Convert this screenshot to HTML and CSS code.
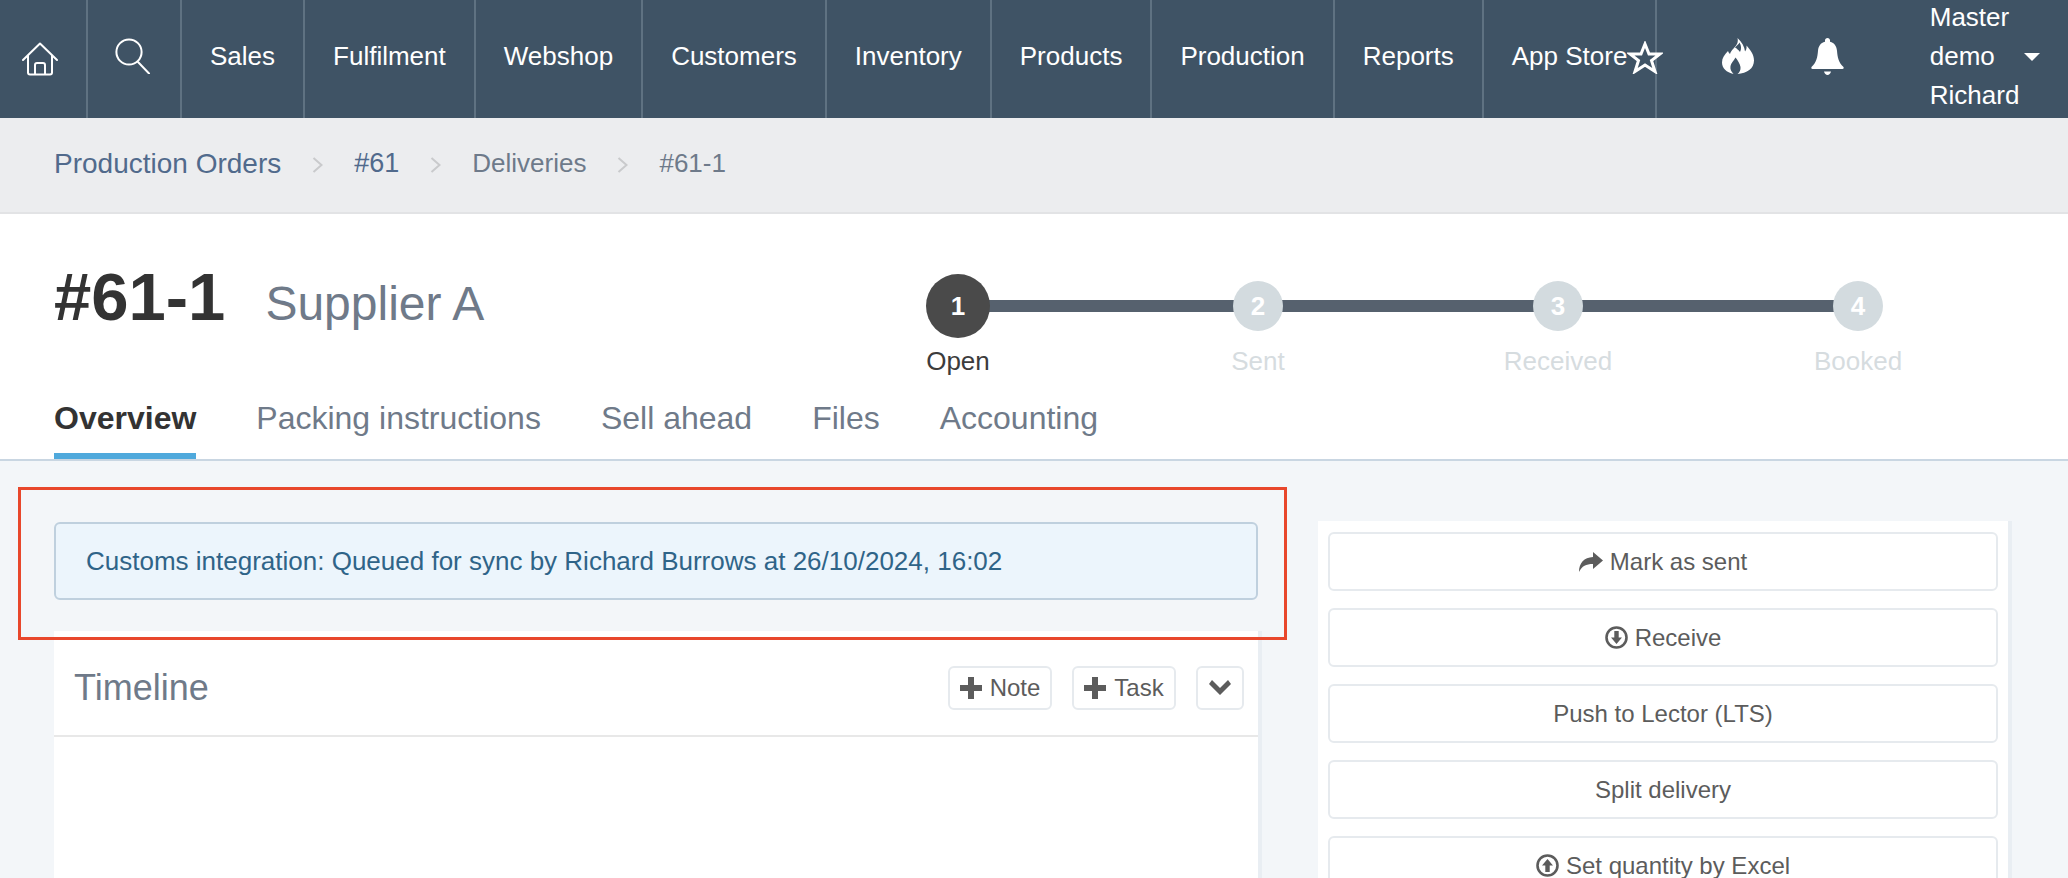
FILE: index.html
```html
<!DOCTYPE html>
<html lang="en">
<head>
<meta charset="utf-8">
<title>#61-1 Supplier A</title>
<link rel="stylesheet" href="styles.css">
</head>
<body>
<nav class="nav">
  <a class="nav-item nav-home"><svg class="icon" width="36" height="34" viewBox="0 0 36 34"><path class="line" d="M1 18 18 1.500 35 18M6 14v16.500a2 2 0 0 0 2 2h20a2 2 0 0 0 2-2V14M13 32V23a2 2 0 0 1 2-2h6a2 2 0 0 1 2 2v9"/></svg></a>
  <a class="nav-item nav-search"><svg class="icon" width="36" height="36" viewBox="0 0 36 36"><circle class="line" cx="14" cy="14" r="12.600"/><path class="line" d="M23 24 34 35.500"/></svg></a>
  <a class="nav-item">Sales</a>
  <a class="nav-item">Fulfilment</a>
  <a class="nav-item">Webshop</a>
  <a class="nav-item">Customers</a>
  <a class="nav-item">Inventory</a>
  <a class="nav-item">Products</a>
  <a class="nav-item">Production</a>
  <a class="nav-item">Reports</a>
  <a class="nav-item nav-store">App Store<svg class="star" width="36" height="33" viewBox="0 0 36 33"><path class="line-thick" d="M18 3 22 13H33L24.500 19.500 28 30.500 18 24 8 30.500 11.500 19.500 3 13H14Z"/></svg></a>
  <div class="nav-icons">
    <svg class="flame" width="32" height="36" viewBox="0 0 32 36"><path class="fill" fill-rule="evenodd" d="M15.500 0C16.500 4 15 7 12 10 10 12 8.500 14 8 16 7 15.200 6.500 14.200 6 13 2.500 16.500 0 20 0 24.500 0 30 4.500 34.500 11.500 36 9 33.500 8 31 8.500 28 9 25 11.500 23 13.500 19.500 15.500 22 18 25.500 18.500 29 18.800 32 17.500 34.500 15.500 36 25 35.500 32 30.500 32 22.500 32 16.500 28.500 12 24.500 7.500 24.800 10 24.300 12 23 13.500 22.500 9 20 4 15.500 0ZM13 9.500C15 7.500 16.800 6 17.500 4.500 19.500 8 19.500 11 18 14 16.500 12 14.800 10.500 13 9.500Z"/></svg>
    <svg class="bell" width="33" height="37" viewBox="0 0 33 37"><path class="fill" d="M16.500 0c1.500 0 2.500 1 2.500 2.500v1.200c4.500 1 6.500 4.500 7 9 .5 6 1.500 12 6.500 16.300.5 1 0 2-1 2H1.500c-1 0-1.500-1-1-2C5.500 24.700 6.500 18.700 7 12.700c.5-4.500 2.500-8 7-9V2.500C14 1 15 0 16.500 0ZM13 33.500h7c-.5 2-2 3.500-3.500 3.500S13.500 35.500 13 33.500Z"/></svg>
  </div>
  <div class="nav-user">
    <div class="nav-user-name">Master<br>demo<br>Richard</div>
    <span class="caret"></span>
  </div>
</nav>

<div class="crumbs">
  <a class="crumb crumb-link">Production Orders</a>
  <svg class="chev" width="11" height="16" viewBox="0 0 11 16"><path d="M1.500 1 9.500 8 1.500 15"/></svg>
  <a class="crumb crumb-link crumb-id">#61</a>
  <svg class="chev" width="11" height="16" viewBox="0 0 11 16"><path d="M1.500 1 9.500 8 1.500 15"/></svg>
  <a class="crumb">Deliveries</a>
  <svg class="chev" width="11" height="16" viewBox="0 0 11 16"><path d="M1.500 1 9.500 8 1.500 15"/></svg>
  <span class="crumb">#61-1</span>
</div>

<header class="head">
  <div class="head-top">
    <div class="title">
      <h1>#61-1</h1>
      <span class="supplier">Supplier A</span>
    </div>
    <ol class="steps">
      <li class="step step-active"><span class="dot">1</span><span class="step-label">Open</span></li>
      <li class="step"><span class="dot">2</span><span class="step-label">Sent</span></li>
      <li class="step"><span class="dot">3</span><span class="step-label">Received</span></li>
      <li class="step step-last"><span class="dot">4</span><span class="step-label">Booked</span></li>
    </ol>
  </div>
  <div class="tabs">
    <a class="tab tab-active">Overview</a>
    <a class="tab">Packing instructions</a>
    <a class="tab">Sell ahead</a>
    <a class="tab">Files</a>
    <a class="tab">Accounting</a>
  </div>
</header>

<main class="main">
  <section class="left">
    <div class="alert">Customs integration: Queued for sync by Richard Burrows at 26/10/2024, 16:02</div>
    <div class="card">
      <div class="card-head">
        <h2>Timeline</h2>
        <div class="card-actions">
          <button class="btn"><svg class="glyph" width="22" height="22" viewBox="0 0 22 22"><path d="M8 0h6v8h8v6h-8v8H8v-8H0V8h8Z"/></svg>Note</button>
          <button class="btn"><svg class="glyph" width="22" height="22" viewBox="0 0 22 22"><path d="M8 0h6v8h8v6h-8v8H8v-8H0V8h8Z"/></svg>Task</button>
          <button class="btn btn-icon"><svg class="glyph-chev" width="22" height="16" viewBox="0 0 22 16"><path d="M3 0 11 8 19 0 22 4 11 15 0 4Z"/></svg></button>
        </div>
      </div>
    </div>
  </section>
  <aside class="panel">
    <button class="action"><svg class="glyph" width="24" height="20" viewBox="0 0 24 20"><path d="M14 0 24 8.500 14 17V12C7 12 3 14 0 20 0 11 5 5.500 14 5Z"/></svg>Mark as sent</button>
    <button class="action"><svg class="glyph" width="23" height="23" viewBox="0 0 23 23"><circle cx="11.500" cy="11.500" r="10" fill="none" stroke="#5c5c5c" stroke-width="2.600"/><path d="M9.300 5h4.400v6.500h3.300l-5.500 6.500-5.500-6.500h3.300Z"/></svg>Receive</button>
    <button class="action">Push to Lector (LTS)</button>
    <button class="action">Split delivery</button>
    <button class="action"><svg class="glyph" width="23" height="23" viewBox="0 0 23 23"><circle cx="11.500" cy="11.500" r="10" fill="none" stroke="#5c5c5c" stroke-width="2.600"/><path d="M9.300 18h4.400v-6.500h3.300L11.500 5 6 11.500h3.300Z"/></svg>Set quantity by Excel</button>
  </aside>
  <div class="highlight"></div>
</main>
</body>
</html>
```
FILE: styles.css
```css
* { box-sizing: border-box; }
html, body { margin: 0; height: 100%; overflow: hidden; }
body { font-family: "Liberation Sans", Arial, sans-serif; font-size: 26px; background: #f3f6f9; color: #333; }
h1, h2, ol { margin: 0; padding: 0; }

.nav { display: flex; height: 118px; background: #3f5365; color: #fff; font-size: 26px; }
.nav-item { display: flex; align-items: center; padding: 0 28px 6px; border-right: 2px solid #5f7282; white-space: nowrap; }
.nav-home { width: 88px; padding: 0 0 0 22px; }
.nav-search { width: 94px; padding: 0 0 6px 27px; }
.nav-store { padding-right: 0; width: 173px; }
.icon, .star, .flame, .bell { display: block; flex: none; }
.star { margin-top: 3px; }
.line { fill: none; stroke: #fff; stroke-width: 2; stroke-linecap: round; stroke-linejoin: round; }
.line-thick { fill: none; stroke: #fff; stroke-width: 3; stroke-linejoin: miter; }
.fill { fill: #fff; }
.nav-icons { display: flex; align-items: center; gap: 57px; padding: 0 0 6px 65px; }
.nav-user { display: flex; align-items: center; margin-left: 86px; }
.nav-user-name { line-height: 39px; width: 94px; margin-top: -6px; }
.caret { width: 0; height: 0; border-left: 8px solid transparent; border-right: 8px solid transparent; border-top: 8px solid #fff; margin-top: -4px; }

.crumbs { display: flex; align-items: center; gap: 31px; height: 96px; padding: 0 54px 1px; background: #ecedef; border-bottom: 2px solid #e2e3e5; font-size: 28px; }
.crumb { color: #6e7a8a; padding-bottom: 2px; font-size: 26px; }
.crumb-link { color: #516a8c; font-size: 28px; }
.crumb-id { font-size: 27px; }
.chev { fill: none; stroke: #c9cacc; stroke-width: 2; flex: none; }

.head { background: #fff; border-bottom: 2px solid #c9d6e2; height: 247px; padding-left: 54px; display: flex; flex-direction: column; }
.head-top { display: flex; height: 177px; }
.title { display: flex; align-items: baseline; gap: 40px; width: 754px; padding-top: 46px; }
.title h1 { font-size: 67px; font-weight: bold; color: #333; line-height: 74px; }
.supplier { font-size: 48px; color: #6f7a89; }
.steps { list-style: none; display: flex; padding-top: 60px; }
.step { position: relative; width: 300px; display: flex; flex-direction: column; align-items: center; z-index: 0; }
.step::after { content: ""; position: absolute; left: 50%; top: 26px; width: 300px; height: 12px; background: #56616e; z-index: -1; }
.step-last::after { display: none; }
.dot { width: 50px; height: 50px; margin: 7px 0; border-radius: 50%; background: #d3dbdf; color: #fff; font-weight: bold; font-size: 26px; display: flex; align-items: center; justify-content: center; }
.step-active .dot { width: 64px; height: 64px; margin: 0; background: #4a4a4a; }
.step-label { color: #d6dcdf; line-height: 30px; margin-top: 8px; }
.step-active .step-label { color: #3c3c3c; }

.tabs { display: flex; gap: 60px; margin-top: auto; font-size: 32px; color: #6f7a89; }
.tab { height: 70px; padding-top: 11px; line-height: 37px; }
.tab-active { font-weight: bold; color: #333; border-bottom: 6px solid #4fa9dc; }

.main { position: relative; height: 417px; overflow: hidden; display: grid; grid-template-columns: 1208px 694px; gap: 56px; padding: 61px 0 0 54px; }
.alert { height: 78px; padding: 0 30px; display: flex; align-items: center; background: #ecf5fc; border: 2px solid #bfd0de; border-radius: 6px; color: #2f6488; width: 1204px; }
.card { margin-top: 31px; min-height: 300px; background: #fff; border-right: 4px solid #e9eef3; }
.card-head { display: flex; align-items: center; justify-content: space-between; height: 106px; padding: 0 14px 0 20px; border-bottom: 2px solid #e8e8e8; }
.card-head h2 { font-size: 36px; font-weight: normal; color: #6f7a89; margin-top: 9px; }
.card-actions { display: flex; gap: 20px; margin-top: 10px; }
.btn, .action { font-family: inherit; font-size: 24px; color: #5c5c5c; background: #fff; border: 2px solid #e6eaee; border-radius: 6px; display: flex; align-items: center; justify-content: center; }
.btn { height: 44px; width: 104px; padding: 0; gap: 8px; }
.btn-icon { width: 48px; }
.glyph, .glyph-chev { fill: #5c5c5c; flex: none; }
.panel { align-self: start; display: flex; flex-direction: column; gap: 17px; padding: 11px 10px 11px 10px; background: #fff; border-right: 4px solid #e9eef3; margin-top: -1px; }
.action { height: 59px; width: 100%; flex: none; gap: 7px; padding: 0; }
.highlight { position: absolute; left: 18px; top: 26px; width: 1269px; height: 153px; border: 3px solid #e8472c; }
```
